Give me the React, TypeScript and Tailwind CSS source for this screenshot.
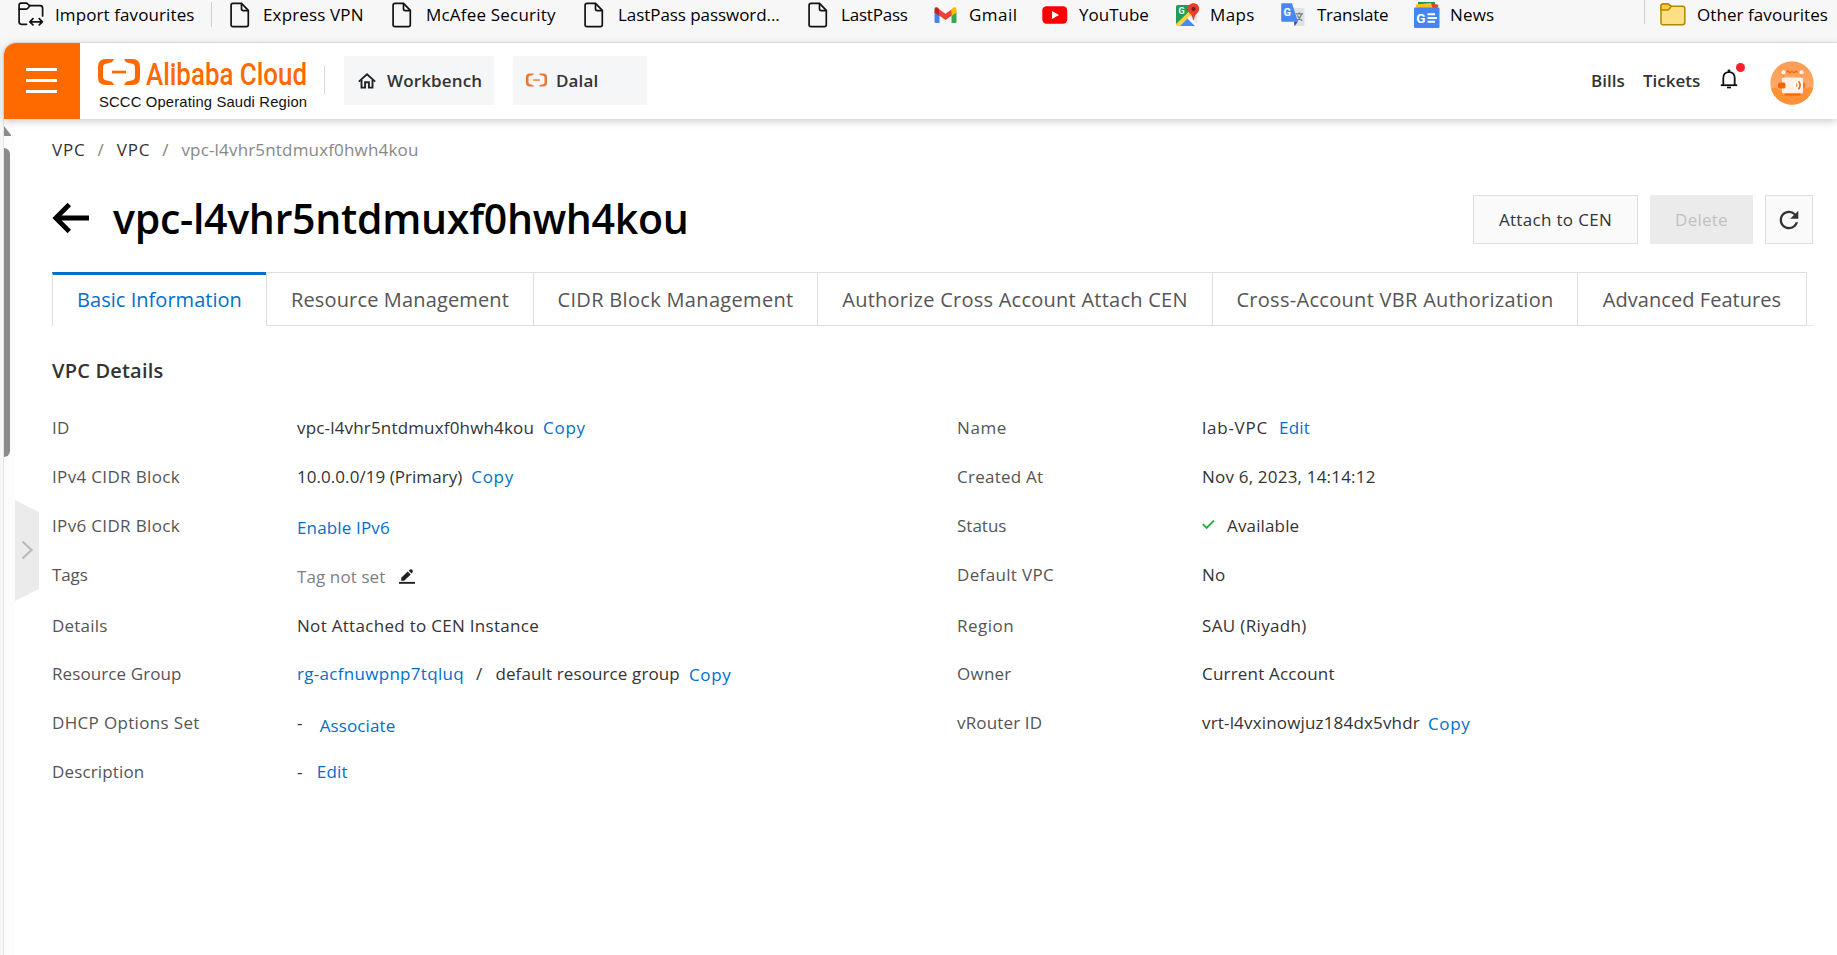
import type { ReactNode } from 'react';
import { MdRefresh } from 'react-icons/md';

/* ---------- Icons ---------- */

function PageIcon() {
  return (
    <svg width="20" height="26" viewBox="0 0 20 26" fill="none" stroke="#111" strokeWidth="1.7" strokeLinejoin="round">
      <path d="M3 1.3H11.5L18.3 8.4V22.8Q18.3 24.7 16.4 24.7H3Q1.1 24.7 1.1 22.8V3.2Q1.1 1.3 3 1.3Z" />
      <path d="M11.5 1.5V6.8Q11.5 8.6 13.2 8.6H18" />
    </svg>
  );
}

function ImportIcon() {
  return (
    <svg width="26" height="26" viewBox="0 0 26 26" fill="none" stroke="#111" strokeWidth="1.7" strokeLinejoin="round" strokeLinecap="round">
      <path d="M8.5 22.3H3.4Q1.1 22.3 1.1 20V3.3Q1.1 1.2 3.2 1.2H8.2Q9 1.2 9.6 1.8L11.6 3.6H22Q24.6 3.6 24.6 6.2V14" />
      <path d="M1.2 7.2H7.8Q9 7.2 9.8 6.3L11.8 3.7" />
      <path d="M12 19.8H24.2M15 16.7L11.8 19.8L15 22.9M21.2 16.7L24.4 19.8L21.2 22.9" />
    </svg>
  );
}

function GmailIcon() {
  return (
    <svg width="23" height="18" viewBox="0 0 23 18">
      <path d="M.5 5.5H5.5V17H2Q.5 17 .5 15.5Z" fill="#4285f4" />
      <path d="M17.5 5.5H22.5V15.5Q22.5 17 21 17H17.5Z" fill="#34a853" />
      <path d="M17.5 3.2L19.3 1.6Q22.5 .2 22.5 3.6V6.5L17.5 10Z" fill="#fbbc04" />
      <path d="M5.5 3.4L11.5 7.8L17.5 3.4V9.8L11.5 14L5.5 9.8Z" fill="#ea4335" />
      <path d="M.5 3.6Q.5 .2 3.7 1.6L5.5 3.4V10L.5 6.5Z" fill="#c5221f" />
    </svg>
  );
}

function YouTubeIcon() {
  return (
    <svg width="26" height="18" viewBox="0 0 26 18">
      <rect x=".3" y=".3" width="25" height="17.5" rx="4.2" fill="#f00" />
      <path d="M10 5L17 9L10 13Z" fill="#fff" />
    </svg>
  );
}

function MapsIcon() {
  return (
    <svg width="24" height="24" viewBox="0 0 24 24">
      <clipPath id="mapSheet">
        <rect x="0" y="2" width="21" height="21" rx="2" />
      </clipPath>
      <g clipPath="url(#mapSheet)">
        <rect y="2" width="21" height="21" fill="#e4e5e7" />
        <path d="M0 2H14V10L0 22Z" fill="#1f9d57" />
        <path d="M0 21L13 8.5L16 11.5L3.5 23H0Z" fill="#fdd23c" />
        <path d="M3.5 23.5L11.5 15.5L19.5 23.5Z" fill="#4a89f3" />
        <path d="M11.5 15.5L13.5 13.5L21 21V23H19.5Z" fill="#fff" />
      </g>
      <text x="2.5" y="10.5" fontFamily="Roboto, sans-serif" fontSize="9" fontWeight="700" fill="#fff">G</text>
      <path d="M17.5 .3C13.9 .3 11.8 3 11.8 6C11.8 10 16.5 11 17 16.5Q17.5 17.5 18 16.5C18.5 11 23.2 10 23.2 6C23.2 3 21.1 .3 17.5 .3Z" fill="#e3402f" />
      <circle cx="17.5" cy="6" r="2" fill="#7c1710" />
    </svg>
  );
}

function TranslateIcon() {
  return (
    <svg width="24" height="24" viewBox="0 0 24 24">
      <path d="M10 5H22Q23.5 5 23.5 6.5V21.5Q23.5 23 22 23H14Z" fill="#dfe1e3" />
      <path d="M13 18.5H17L13.5 23.2Z" fill="#3848ab" />
      <path d="M1.5 .3H11L17 18.7H1.5Q.2 18.7 .2 17.4V1.6Q.2 .3 1.5 .3Z" fill="#4a86f2" />
      <text x="2.6" y="12.8" fontFamily="Roboto, sans-serif" fontSize="11" fontWeight="700" fill="#fff">G</text>
      <path d="M14.8 10.8H22M18.3 9.3V10.8M20.8 10.8Q19.5 15 16 17.5M16.3 12.5Q18 16 21.3 17.8" fill="none" stroke="#6b7f88" strokeWidth="1.2" />
    </svg>
  );
}

function NewsIcon() {
  return (
    <svg width="26" height="26" viewBox="0 0 26 26">
      <path d="M4 0H21V8H4Z" fill="#0c9d58" />
      <path d="M15 1L24.5 2.8L23 8H12Z" fill="#e8402f" />
      <path d="M1.5 2.5L17 1L19 8H3Z" fill="#fcc21b" />
      <rect y="5.5" width="25.5" height="20.5" rx="1.2" fill="#4385f4" />
      <text x="2.2" y="20.6" fontFamily="Roboto, sans-serif" fontSize="13.5" fontWeight="700" fill="#fff">G</text>
      <path d="M13.5 12.3H21M13.5 16H23M13.5 19.7H21" stroke="#fff" strokeWidth="1.9" />
    </svg>
  );
}

function FolderIcon() {
  return (
    <svg width="26" height="23" viewBox="0 0 26 23" stroke="#b38600" strokeWidth="1.5" strokeLinejoin="round">
      <path d="M1 3.2Q1 1 3.2 1H8.3L11.2 3.3H22.6Q24.8 3.3 24.8 5.5V19.6Q24.8 21.8 22.6 21.8H3.2Q1 21.8 1 19.6Z" fill="#ffdf84" />
      <path d="M1 3.2Q1 1 3.2 1H8.3L11.2 3.3L9 6.2Q8.3 7 7.3 7H1Z" fill="#fccb3f" />
    </svg>
  );
}

function BracketMark({ className }: { className: string }) {
  return (
    <svg className={className} viewBox="0 0 42 26" fill="currentColor">
      <path d="M16 0H7.5Q0 0 0 7.5V18.5Q0 26 7.5 26H16L14 22.800L7.7 21.3Q5 20.6 5 17.8V8.2Q5 5.4 7.7 4.7L14 3.2Z" />
      <path d="M26 0H34.5Q42 0 42 7.5V18.5Q42 26 34.5 26H26L28 22.800L34.3 21.3Q37 20.6 37 17.8V8.2Q37 5.4 34.3 4.7L28 3.2Z" />
      <rect x="14" y="11.7" width="14" height="2.7" />
    </svg>
  );
}

function HomeIcon() {
  return (
    <svg width="18" height="16" viewBox="0 0 18 16" fill="none" stroke="#222" strokeWidth="1.9">
      <path d="M.8 8.6L9 1.3L17.2 8.6" />
      <path d="M3.5 7V14.6H7.1V9.2H10.9V14.6H14.5V7" />
    </svg>
  );
}

function BellIcon() {
  return (
    <svg width="18" height="20" viewBox="0 0 18 20" fill="none" stroke="#111" strokeWidth="1.8">
      <path d="M3.3 16V9.2Q3.3 3.2 9 3.2Q14.7 3.2 14.7 9.2V16" />
      <path d="M.8 16.2H17.2" />
      <path d="M9 .6V3" strokeWidth="2.6" />
      <path d="M7 18.5H11" strokeWidth="1.7" />
    </svg>
  );
}

function Avatar() {
  return (
    <svg width="44" height="44" viewBox="0 0 44 44">
      <defs>
        <linearGradient id="sky" x1="0" y1="0" x2="0" y2="1">
          <stop offset="0" stopColor="#ff9a52" />
          <stop offset="1" stopColor="#ffb57c" />
        </linearGradient>
        <clipPath id="disc">
          <circle cx="22" cy="22" r="21.7" />
        </clipPath>
      </defs>
      <g clipPath="url(#disc)">
        <rect width="44" height="44" fill="url(#sky)" />
        <path d="M0 28Q5 25 10 29Q14 32 20 30L34 28Q38 25 44 27V44H0Z" fill="#ff9236" />
      </g>
      <path d="M13.5 11V18M31.5 11V18" stroke="#ff8a3c" strokeWidth="1.3" />
      <path d="M16 11.5L18 10L20 12L22 10L24 12L26 10L28 11.5" fill="none" stroke="#fa6400" strokeWidth="1.1" />
      <circle cx="13.5" cy="11.3" r="2.1" fill="#fff2e6" />
      <circle cx="31.5" cy="11.3" r="2.1" fill="#fff2e6" />
      <rect x="31" y="21.5" width="4.5" height="6" rx="1.8" fill="#fa7a1e" />
      <rect x="12" y="16.5" width="21" height="16" rx="1.5" fill="#fff1e6" />
      <rect x="8" y="21.5" width="7.5" height="6" rx="1.8" fill="#fa6400" />
      <rect x="14.5" y="32.5" width="16" height="2" fill="#fa6400" />
      <circle cx="27.8" cy="24.2" r="4.8" fill="#fff" />
      <path d="M28.5 20.2Q31.8 24.2 28.5 28.2" fill="none" stroke="#fa6400" strokeWidth="1.6" />
      <path d="M26.3 22Q28.6 24.2 26.3 26.4Z" fill="#fa6400" />
    </svg>
  );
}

function PencilIcon() {
  return (
    <svg width="16" height="15" viewBox="0 0 16 15" fill="#222">
      <path d="M2.2 11.7V8.7L8.8 2.6L11.7 5.5L5.2 11.7Z" />
      <path d="M9.7 1.8L11 .6Q12.2 -.2 13.2 .8Q14.2 1.9 13.5 3.2L12.5 4.6Z" />
      <rect y="12.9" width="16" height="1.9" />
    </svg>
  );
}

/* ---------- Bookmarks bar ---------- */

const bookmarks: { label: string; icon: ReactNode; box: string; iconBox: string; text: string }[] = [
  { label: 'Express VPN', icon: <PageIcon />, box: 'w-[162px]', iconBox: 'w-[33px]', text: 'tracking-[0.15px]' },
  { label: 'McAfee Security', icon: <PageIcon />, box: 'w-[192px]', iconBox: 'w-[34px]', text: 'tracking-[0.2px]' },
  { label: 'LastPass password...', icon: <PageIcon />, box: 'w-[224px]', iconBox: 'w-[34px]', text: 'tracking-[-0.06px]' },
  { label: 'LastPass', icon: <PageIcon />, box: 'w-[126px]', iconBox: 'w-[33px]', text: 'tracking-[-0.2px]' },
  { label: 'Gmail', icon: <GmailIcon />, box: 'w-[108px]', iconBox: 'w-[35px]', text: 'tracking-[0.5px]' },
  { label: 'YouTube', icon: <YouTubeIcon />, box: 'w-[134px]', iconBox: 'w-[37px]', text: 'tracking-[0px]' },
  { label: 'Maps', icon: <MapsIcon />, box: 'w-[105px]', iconBox: 'w-[34px]', text: 'tracking-[0.4px]' },
  { label: 'Translate', icon: <TranslateIcon />, box: 'w-[133px]', iconBox: 'w-[36px]', text: 'tracking-[-0.25px]' },
  { label: 'News', icon: <NewsIcon />, box: 'w-[100px]', iconBox: 'w-[36px]', text: 'tracking-[0.2px]' },
];

function BookmarksBar() {
  return (
    <div className="flex h-[42px] shrink-0 items-start bg-[#f7f7f7] pl-[18px] text-black">
      <div className="flex h-[29px] w-[193px] items-center">
        <span className="w-[37px] shrink-0"><ImportIcon /></span>
        <span className="tracking-[0.1px]">Import favourites</span>
      </div>
      <div className="mt-[2px] mr-[18px] h-[25px] w-px bg-[#cfcfcf]" />
      {bookmarks.map((b) => (
        <div key={b.label} className={`flex h-[29px] items-center ${b.box}`}>
          <span className={`shrink-0 ${b.iconBox}`}>{b.icon}</span>
          <span className={b.text}>{b.label}</span>
        </div>
      ))}
      <div className="ml-auto h-[24px] w-px bg-[#cfcfcf]" />
      <div className="ml-[15px] flex h-[29px] w-[177px] items-center">
        <span className="w-[37px] shrink-0"><FolderIcon /></span>
        <span className="tracking-[0.07px]">Other favourites</span>
      </div>
    </div>
  );
}

/* ---------- Console header ---------- */

function Header() {
  return (
    <header className="relative z-10 flex h-[76px] shrink-0 items-center rounded-tl-[12px] bg-white font-semibold text-[#333] shadow-[0_2px_8px_rgba(0,0,0,0.22)]">
      <button className="flex h-full w-[76px] flex-col justify-center gap-[8px] rounded-tl-[12px] bg-[#ff6a00] pb-[2px] pl-[22px]">
        <span className="h-[3px] w-[31px] bg-white" />
        <span className="h-[3px] w-[31px] bg-white" />
        <span className="h-[3px] w-[31px] bg-white" />
      </button>
      <div className="ml-[18px] flex w-[226px] flex-col pt-[7px]">
        <div className="flex h-[34px] items-center text-[#ff6a00]">
          <BracketMark className="mb-[3px] h-[26px] w-[42px]" />
          <svg className="ml-[6px] overflow-visible" width="164" height="40" viewBox="0 0 164 40">
            <text x="0" y="31" fontFamily="Roboto, sans-serif" fontSize="32" fontWeight="500" fill="currentColor" textLength="161" lengthAdjust="spacingAndGlyphs">Alibaba Cloud</text>
          </svg>
        </div>
        <svg className="overflow-visible" width="214" height="22" viewBox="0 0 214 22">
          <text x="1" y="15.5" fontFamily="Liberation Sans, sans-serif" fontSize="14.8" fontWeight="400" fill="#111" textLength="208" lengthAdjust="spacing">SCCC Operating Saudi Region</text>
        </svg>
      </div>
      <div className="mb-[2px] h-[28px] w-px bg-[#dcdcdc]" />
      <div className="mb-[2px] ml-[19px] flex h-[49px] w-[150px] items-center bg-[#f4f6f8] pt-px pl-[14px]">
        <HomeIcon />
        <span className="ml-[11px] tracking-[0.15px]">Workbench</span>
      </div>
      <div className="mb-[2px] ml-[19px] flex h-[49px] w-[134px] items-center bg-[#f4f6f8] pt-px pl-[13px]">
        <BracketMark className="mb-px h-[14px] w-[21px] text-[#f0762f]" />
        <span className="ml-[9px] tracking-[0.14px]">Dalal</span>
      </div>
      <span className="mb-px ml-auto w-[52px]">Bills</span>
      <span className="mb-px w-[77px]">Tickets</span>
      <div className="relative mt-[-4px] w-[50px]">
        <BellIcon />
        <span className="absolute top-[-6px] left-[16px] size-[9px] rounded-full bg-[#fb1f2d]" />
      </div>
      <div className="mt-[3px] w-[67px]"><Avatar /></div>
    </header>
  );
}

/* ---------- Detail page ---------- */

const tabs = [
  { label: 'Resource Management', cls: 'w-[267px] tracking-[0.15px]' },
  { label: 'CIDR Block Management', cls: 'w-[284px] tracking-[0.32px]' },
  { label: 'Authorize Cross Account Attach CEN', cls: 'w-[395px] tracking-[0.25px]' },
  { label: 'Cross-Account VBR Authorization', cls: 'w-[365px] tracking-[0.3px]' },
  { label: 'Advanced Features', cls: 'w-[230px] border-r tracking-[0.05px]' },
];

function Link({ children, className = '' }: { children: ReactNode; className?: string }) {
  return <a className={`text-[#0070cc] ${className}`}>{children}</a>;
}

function Row({ label, h = 'h-[49px]', labelCls = '', children }: { label: string; h?: string; labelCls?: string; children: ReactNode }) {
  return (
    <div className={`flex items-start ${h}`}>
      <dt className={`w-[245px] shrink-0 text-[#555] ${labelCls}`}>{label}</dt>
      <dd className="flex items-start text-[#333]">{children}</dd>
    </div>
  );
}

function Details() {
  return (
    <div className="mt-[32px] flex leading-[24px] tracking-[0.25px] whitespace-nowrap">
      <dl className="w-[905px]">
        <Row label="ID">
          <span className="tracking-[0.17px]">vpc-l4vhr5ntdmuxf0hwh4kou</span>
          <Link className="ml-[9px] tracking-[0.7px]">Copy</Link>
        </Row>
        <Row label="IPv4 CIDR Block" labelCls="tracking-[0.34px]">
          <span className="tracking-[0.05px]">10.0.0.0/19 (Primary)</span>
          <Link className="ml-[9px] tracking-[0.7px]">Copy</Link>
        </Row>
        <Row label="IPv6 CIDR Block" labelCls="tracking-[0.34px]">
          <Link className="mt-[2px] tracking-[0.15px]">Enable IPv6</Link>
        </Row>
        <Row label="Tags" h="h-[51px]" labelCls="tracking-[-0.1px]">
          <span className="mt-[2px] tracking-[0.1px] text-[#808080]">Tag not set</span>
          <span className="mt-[6px] ml-[14px]"><PencilIcon /></span>
        </Row>
        <Row label="Details" h="h-[48px]" labelCls="tracking-[0.2px]">
          <span className="tracking-[0.3px]">Not Attached to CEN Instance</span>
        </Row>
        <Row label="Resource Group" labelCls="tracking-[0.1px]">
          <Link className="tracking-[0.3px]">rg-acfnuwpnp7tqluq</Link>
          <span className="ml-[12px]">/</span>
          <span className="ml-[13px] tracking-[0.12px]">default resource group</span>
          <Link className="mt-px ml-[9px] tracking-[0.7px]">Copy</Link>
        </Row>
        <Row label="DHCP Options Set" labelCls="tracking-[0.34px]">
          <span>-</span>
          <Link className="mt-[3px] ml-[17px] tracking-[0.11px]">Associate</Link>
        </Row>
        <Row label="Description" labelCls="tracking-[0.15px]">
          <span>-</span>
          <Link className="ml-[14px]">Edit</Link>
        </Row>
      </dl>
      <dl>
        <Row label="Name" labelCls="tracking-[0.6px]">
          <span className="tracking-[0.75px]">lab-VPC</span>
          <Link className="ml-[11px]">Edit</Link>
        </Row>
        <Row label="Created At">
          <span className="tracking-[0.2px]">Nov 6, 2023, 14:14:12</span>
        </Row>
        <Row label="Status" labelCls="tracking-[0px]">
          <svg className="mt-[5px]" width="14" height="12" viewBox="0 0 14 12" fill="none" stroke="#1eb13c" strokeWidth="1.9">
            <path d="M.8 5.2L4.6 9L11.9 1.7" />
          </svg>
          <span className="ml-[11px] tracking-[0.15px]">Available</span>
        </Row>
        <Row label="Default VPC" h="h-[51px]" labelCls="tracking-[0.35px]">No</Row>
        <Row label="Region" h="h-[48px]" labelCls="tracking-[0.5px]">
          <span className="tracking-[0.35px]">SAU (Riyadh)</span>
        </Row>
        <Row label="Owner">
          <span className="tracking-[0.2px]">Current Account</span>
        </Row>
        <Row label="vRouter ID" labelCls="tracking-[0.15px]">
          <span className="tracking-[0.17px]">vrt-l4vxinowjuz184dx5vhdr</span>
          <Link className="mt-px ml-[8px] tracking-[0.7px]">Copy</Link>
        </Row>
      </dl>
    </div>
  );
}

export default function App() {
  return (
    <div className="flex h-[955px] w-full flex-col overflow-hidden bg-[#f7f7f7] font-['Open_Sans',sans-serif] text-[17px] whitespace-nowrap">
      <BookmarksBar />
      <div className="ml-[3px] flex min-h-0 flex-1 flex-col rounded-tl-[13px] border-t border-l border-[#e6e6e6] bg-white">
        <Header />
        <div className="flex min-h-0 flex-1">
          <aside className="w-[11px] shrink-0 bg-[#fcfcfc] pt-[7px]">
            <svg width="8" height="10" viewBox="0 0 8 10" fill="#8b8b8b">
              <path d="M0 0L7 9V10H0Z" />
            </svg>
            <div className="mt-[12px] h-[309px] w-[6px] rounded-r-[6px] bg-[#8b8b8b]" />
          </aside>
          <div className="w-[24px] shrink-0 pt-[381px]">
            <svg width="24" height="101" viewBox="0 0 24 101">
              <path d="M0 0L24 12V89L0 101Z" fill="#ebebeb" />
              <path d="M7.5 41.5L16.5 50L7.5 58.5" fill="none" stroke="#bdbdbd" strokeWidth="2.4" />
            </svg>
          </div>
          <main className="min-w-0 flex-1 pr-[24px] pl-[13px]">
            <nav className="mt-[19px] flex leading-[24px] text-[#333]">
              <span className="tracking-[0.8px]">VPC</span>
              <span className="ml-[12px] text-[#808080]">/</span>
              <span className="ml-[13px] tracking-[0.8px]">VPC</span>
              <span className="ml-[12px] text-[#808080]">/</span>
              <span className="ml-[13px] tracking-[0.17px] text-[#888]">vpc-l4vhr5ntdmuxf0hwh4kou</span>
            </nav>
            <div className="mt-[26px] flex h-[60px] items-center">
              <svg width="38" height="30" viewBox="0 0 38 30" fill="none" stroke="#000" strokeWidth="4.8">
                <path d="M3.5 15H37" />
                <path d="M17.3 1.5L3.8 15L17.3 28.5" />
              </svg>
              <h1 className="ml-[23px] text-[41px] leading-[58px] font-semibold tracking-[-0.27px] text-black">vpc-l4vhr5ntdmuxf0hwh4kou</h1>
              <div className="mt-[2px] ml-auto flex gap-[12px]">
                <button className="h-[49px] w-[165px] border border-[#dedede] bg-[#fafafa] pt-[2px] tracking-[0.33px] text-[#333]">Attach to CEN</button>
                <button className="h-[49px] w-[103px] bg-[#ebebeb] pt-[2px] tracking-[0.24px] text-[#c1c1c1]">Delete</button>
                <button className="flex h-[49px] w-[48px] items-center justify-center border border-[#dedede] bg-[#fafafa] pt-[2px] text-[#333]">
                  <MdRefresh size={28} />
                </button>
              </div>
            </div>
            <div className="mt-[24px] flex h-[54px] text-[20px] leading-[28px] text-[#555]">
              <div className="flex w-[214px] items-center justify-center border-t-[3px] border-l border-t-[#0070cc] border-l-[#dedede] pb-[2px] tracking-[0.03px] text-[#0070cc]">
                Basic Information
              </div>
              {tabs.map((t) => (
                <div key={t.label} className={`flex items-center justify-center border-y border-l border-[#dedede] pt-[2px] ${t.cls}`}>
                  {t.label}
                </div>
              ))}
              <span className="flex-1 border-b border-[#ebebeb]" />
            </div>
            <h2 className="mt-[31px] text-[20px] leading-[27px] font-semibold tracking-[0.2px] text-[#333]">VPC Details</h2>
            <Details />
          </main>
        </div>
      </div>
    </div>
  );
}
